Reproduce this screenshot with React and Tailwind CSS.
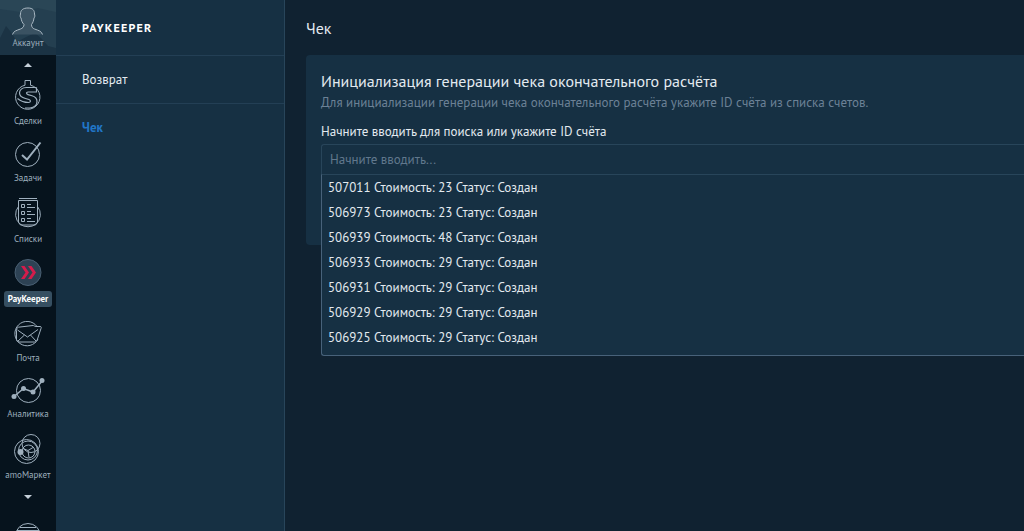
import React, { useState } from "react";

const invoices = [
  { id: 507011, cost: 23, status: "Создан" },
  { id: 506973, cost: 23, status: "Создан" },
  { id: 506939, cost: 48, status: "Создан" },
  { id: 506933, cost: 29, status: "Создан" },
  { id: 506931, cost: 29, status: "Создан" },
  { id: 506929, cost: 29, status: "Создан" },
  { id: 506925, cost: 29, status: "Создан" },
];

const DealsIcon = () => (
  <svg width="30" height="30" viewBox="0 0 30 30" fill="none" stroke="currentColor">
    <path d="M12 5.200V.5h5.500v4.700A12.200 12.200 0 1 1 12 5.200" />
    <path d="M23.500 7.500H13.500C9 7.500 6.500 10 6.500 13c0 3 2.500 4.500 6 5.500l3.500 1c2 .6 2 3-.5 3-4 0-8-1.500-11-4" strokeWidth="1.200" />
    <path d="M23.500 7.500V12h-8.500c-2 0-2 2 0 2.600l4 1.200c3.500 1 5 3 5 5.700 0 3.500-3 6-7 6.500h-5" strokeWidth="1.200" />
  </svg>
);

const TasksIcon = () => (
  <svg width="30" height="26" viewBox="0 0 30 26" fill="none" stroke="currentColor">
    <circle cx="14.500" cy="13.500" r="12" />
    <path d="M9 14l5 4.500L27.500 1.500" strokeWidth="2" />
  </svg>
);

const ListsIcon = () => (
  <svg width="30" height="30" viewBox="0 0 30 30" fill="none" stroke="currentColor">
    <path d="M6 .5h18M5.500 2.500h19v22l-2 2.500h-15l-2-2.500z" />
    <path d="M5.500 8.500a12.500 12.500 0 0 0 1.500 17.500 13 13 0 0 0 16 0 12.500 12.500 0 0 0 1.500-17.500" />
    <path d="M8.500 6.500h3v3h-3zM8.500 13.500h3v3h-3zM8.500 20.500h3v3h-3z" />
    <path d="M14 6.500h4M14 9.500h8M14 13.500h4M14 16.500h8M14 20.500h4M14 23.500h8" />
  </svg>
);

const PayKeeperIcon = () => (
  <svg width="30" height="27" viewBox="0 0 30 27" fill="none">
    <circle cx="15" cy="13.500" r="13" fill="#2d4254" stroke="#4a6073" />
    <path d="M8 7h3.500l4.500 6.500-4.500 6.500H8l4.500-6.500zM15 7h3.500l4.500 6.500-4.500 6.500H15l4.500-6.500z" fill="#d51c4b" />
  </svg>
);

const MailIcon = () => (
  <svg width="30" height="26" viewBox="0 0 30 26" fill="none" stroke="currentColor">
    <path d="M24 5.500A12.200 12.200 0 1 0 25 18" />
    <path d="M3.500 9.500C3.500 7 4.500 6 7 6l13-1.500c1 0 1.500 1 3 1h4c1.500 0 1.500 1 1 2L24 19.500c-.5 1-1 1.500-2.500 1.500H6c-1.500 0-2.500-1-2.500-2.500z" />
    <path d="M4.500 9l10 7 10.500-7.500M5 20l6.500-6M23 20l-5.500-6" />
  </svg>
);

const AnalyticsIcon = () => (
  <svg width="34" height="25" viewBox="0 0 34 25" fill="none" stroke="currentColor">
    <circle cx="17.500" cy="12.500" r="12" />
    <path d="M3 18.500l9.500-8 9.500 3.500L31.500 2.500" strokeWidth="1.500" />
    <g fill="currentColor" stroke="none">
      <circle cx="3" cy="18.500" r="2.500" />
      <circle cx="12.500" cy="10.500" r="2.500" />
      <circle cx="22" cy="14" r="2.500" />
      <circle cx="31" cy="2.500" r="2.500" />
    </g>
  </svg>
);

const MarketIcon = () => (
  <svg width="30" height="30" viewBox="0 0 30 30" fill="none" stroke="currentColor">
    <circle cx="18" cy="9.500" r="9" />
    <circle cx="13.500" cy="17.500" r="12" />
    <circle cx="15" cy="16.500" r="9.500" />
    <circle cx="15.500" cy="17.500" r="6.500" />
    <path d="M10 14.500l5 2 5-3M15 16.500l1 7" />
    <circle cx="7.500" cy="18" r="3" fill="currentColor" stroke="none" />
  </svg>
);

const MoreIcon = () => (
  <svg width="30" height="26" viewBox="0 0 30 26" fill="none" stroke="currentColor">
    <circle cx="15" cy="13" r="12.500" />
    <path d="M7 4.500h16M4 7.500h22" />
  </svg>
);

const navItems = [
  { label: "Сделки", icon: DealsIcon },
  { label: "Задачи", icon: TasksIcon },
  { label: "Списки", icon: ListsIcon },
  { label: "PayKeeper", icon: PayKeeperIcon, active: true },
  { label: "Почта", icon: MailIcon },
  { label: "Аналитика", icon: AnalyticsIcon },
  { label: "amoМаркет", icon: MarketIcon },
];

const NavRail = () => (
  <nav className="w-14 shrink-0 overflow-hidden bg-[#06131d] text-[#9fb0be]">
    <a href="#account" className="relative flex h-[55px] flex-col justify-end overflow-hidden bg-[#243f50] text-center">
      <svg className="absolute inset-0 h-full w-full" viewBox="0 0 56 55" preserveAspectRatio="none">
        <path d="M0 38L6 26l5 6 6 10 9-5 9-4 6 5 7 8 8 2v9H0z" fill="#1b3344" />
        <path d="M0 0h56v12L38 8 20 12 0 9z" fill="#2a4656" />
        <path
          d="M12.500 34.500c1-3.500 4-4 8-5.500 2-.8 3.500-2 3.500-4.500-2-2-2.500-4-3-6.500-1-1-1-2.500-.5-4 0-4 2.500-6 7.500-6s6.500 2.500 6.500 6c.5 1.500.5 3-.5 4-.5 3-1 4.500-2.500 6.500 0 2.500 1 3.700 3 4.500 4 1.500 7 2 8 5.500"
          fill="#3a5262"
          stroke="#a9b8c3"
        />
      </svg>
      <span className="relative pb-1 text-[9px] leading-4">Аккаунт</span>
    </a>
    <div className="flex flex-col items-center pt-2">
      <button type="button" aria-label="Вверх">
        <svg width="8" height="4" viewBox="0 0 8 4" fill="#c5d0d9">
          <path d="M0 4l4-4 4 4z" />
        </svg>
      </button>
      <ul className="flex flex-col items-center gap-[14px] pt-[13px] pb-[14px]">
        {navItems.map(({ label, icon: Icon, active }) => (
          <li key={label}>
            <a href="#nav" className="flex flex-col items-center gap-[5px] whitespace-nowrap text-[9px] leading-3">
              <Icon />
              {active ? (
                <span className="rounded-[3px] bg-[#364f61] px-1 py-[2px] font-bold text-white">{label}</span>
              ) : (
                <span>{label}</span>
              )}
            </a>
          </li>
        ))}
      </ul>
      <button type="button" aria-label="Вниз">
        <svg width="8" height="4" viewBox="0 0 8 4" fill="#c5d0d9">
          <path d="M0 0h8L4 4z" />
        </svg>
      </button>
      <div className="pt-6">
        <MoreIcon />
      </div>
    </div>
  </nav>
);

const Sidebar = () => (
  <aside className="w-[229px] shrink-0 border-r border-[#28455a] bg-[#163043]">
    <h2 className="flex h-14 items-center border-b border-[#233f55] px-[26px] text-xs font-bold tracking-widest text-white">
      PAYKEEPER
    </h2>
    <a href="#refund" className="flex h-12 items-center border-b border-[#233f55] px-[26px] text-[13px] text-[#e3eaf0]">
      Возврат
    </a>
    <a href="#receipt" className="flex h-12 items-center px-[26px] text-[13px] font-bold text-[#2176c7]">
      Чек
    </a>
  </aside>
);

const App = () => {
  const [query, setQuery] = useState("");

  return (
    <div className="flex h-screen overflow-hidden bg-[#102231] font-['PT_Sans','Noto_Sans',sans-serif] text-[#e3eaf0]">
      <NavRail />
      <Sidebar />
      <main className="min-w-0 flex-1 pl-[21px]">
        <h1 className="flex h-[55px] items-center text-base">Чек</h1>
        <section className="min-h-[190px] rounded-l-sm bg-[#163043] pt-4 pl-[15px]">
          <h2 className="text-base leading-5">Инициализация генерации чека окончательного расчёта</h2>
          <p className="text-[13px] leading-6 text-[#6c8196]">
            Для инициализации генерации чека окончательного расчёта укажите ID счёта из списка счетов.
          </p>
          <label htmlFor="invoice" className="mt-2 block pb-[3px] text-[13px] leading-[18px]">
            Начните вводить для поиска или укажите ID счёта
          </label>
          <div className="relative">
            <input
              id="invoice"
              type="text"
              value={query}
              onChange={(e) => setQuery(e.target.value)}
              placeholder="Начните вводить..."
              className="block h-[31px] w-full rounded-tl-[3px] border border-r-0 border-[#28455a] px-2 text-[13px] outline-none placeholder:text-[#61788d]"
            />
            <ul className="absolute top-[30px] right-0 left-0 rounded-bl-[3px] border border-t-[#28455a] border-r-0 border-b-[#48627a] border-l-[#48627a] bg-[#163043] pb-[5px]">
              {invoices.map((item) => (
                <li key={item.id} className="px-[6px] text-[13px] leading-[25px]">
                  {item.id} Стоимость: {item.cost} Статус: {item.status}
                </li>
              ))}
            </ul>
          </div>
        </section>
      </main>
    </div>
  );
};

export default App;
